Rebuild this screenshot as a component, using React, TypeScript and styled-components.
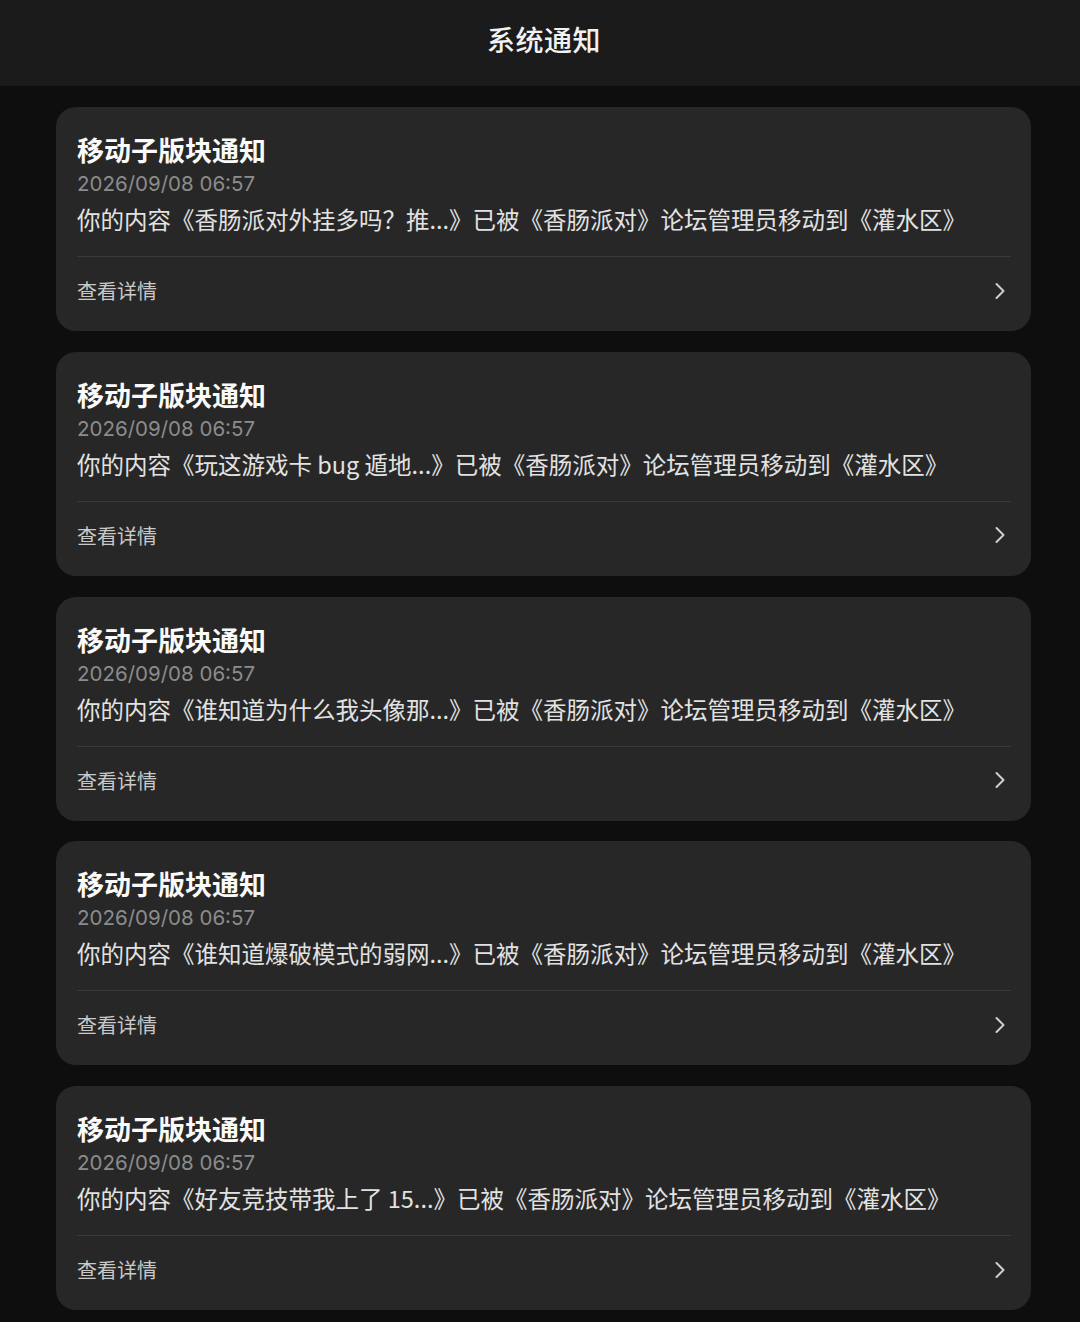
import React from "react";
import styled, { createGlobalStyle } from "styled-components";

const GlobalStyle = createGlobalStyle`
  html, body {
    margin: 0;
    padding: 0;
    background: #0e0e0e;
  }
  body {
    font-family: "Noto Sans CJK SC", "Noto Sans", sans-serif;
    color: #fff;
  }
`;

const Page = styled.div`
  min-height: 1322px;
  background: #0e0e0e;
`;

const Header = styled.header`
  height: 86px;
  background: #1b1b1b;
  display: flex;
  align-items: center;
  justify-content: center;
  padding-bottom: 8px;
  box-sizing: border-box;
`;

const HeaderTitle = styled.h1`
  margin: 0;
  font-size: 28px;
  font-weight: 500;
  color: #f2f2f2;
  letter-spacing: 0.5px;
  padding-left: 8px;
`;

const List = styled.main`
  display: flex;
  flex-direction: column;
  gap: 20.75px;
  padding: 21px 49px 20px 56px;
`;

const Card = styled.section`
  background: #272727;
  border-radius: 20px;
  padding: 26px 20px 7px 21px;
`;

const Title = styled.h2`
  margin: 0;
  font-size: 27px;
  line-height: 34px;
  font-weight: 700;
  color: #fafafa;
`;

const Time = styled.div`
  font-family: Inter, "Noto Sans", sans-serif;
  font-size: 20.5px;
  line-height: 33px;
  color: #8c8c8c;
`;

const Body = styled.p`
  margin: 0;
  font-size: 23.5px;
  line-height: 38px;
  color: #e2e2e2;
  white-space: nowrap;
`;

const Divider = styled.hr`
  margin: 18px 0 0;
  border: 0;
  height: 1px;
  background: #3a3a3a;
`;

const Footer = styled.a`
  height: 67px;
  display: flex;
  align-items: center;
  justify-content: space-between;
  color: #c9c9c9;
  font-size: 20px;
  text-decoration: none;
  cursor: pointer;
`;

const Chevron = styled.svg`
  width: 12px;
  height: 18px;
  margin-right: 5px;
`;

type Notice = {
  title: string;
  time: string;
  post: string;
};

const notices: Notice[] = [
  { title: "移动子版块通知", time: "2026/09/08 06:57", post: "香肠派对外挂多吗？推..." },
  { title: "移动子版块通知", time: "2026/09/08 06:57", post: "玩这游戏卡 bug 遁地..." },
  { title: "移动子版块通知", time: "2026/09/08 06:57", post: "谁知道为什么我头像那..." },
  { title: "移动子版块通知", time: "2026/09/08 06:57", post: "谁知道爆破模式的弱网..." },
  { title: "移动子版块通知", time: "2026/09/08 06:57", post: "好友竞技带我上了 15..." },
];

const NoticeCard = ({ n }: { n: Notice }) => (
  <Card>
    <Title>{n.title}</Title>
    <Time>{n.time}</Time>
    <Body>
      你的内容《{n.post}》已被《香肠派对》论坛管理员移动到《灌水区》
    </Body>
    <Divider />
    <Footer>
      <span>查看详情</span>
      <Chevron viewBox="0 0 12 18" fill="none">
        <path d="M2.5 2 L9.5 9 L2.5 16" stroke="#cfcfcf" strokeWidth="2" strokeLinecap="round" strokeLinejoin="round" />
      </Chevron>
    </Footer>
  </Card>
);

export default function App() {
  return (
    <Page>
      <GlobalStyle />
      <Header>
        <HeaderTitle>系统通知</HeaderTitle>
      </Header>
      <List>
        {notices.map((n, i) => (
          <NoticeCard key={i} n={n} />
        ))}
      </List>
    </Page>
  );
}
